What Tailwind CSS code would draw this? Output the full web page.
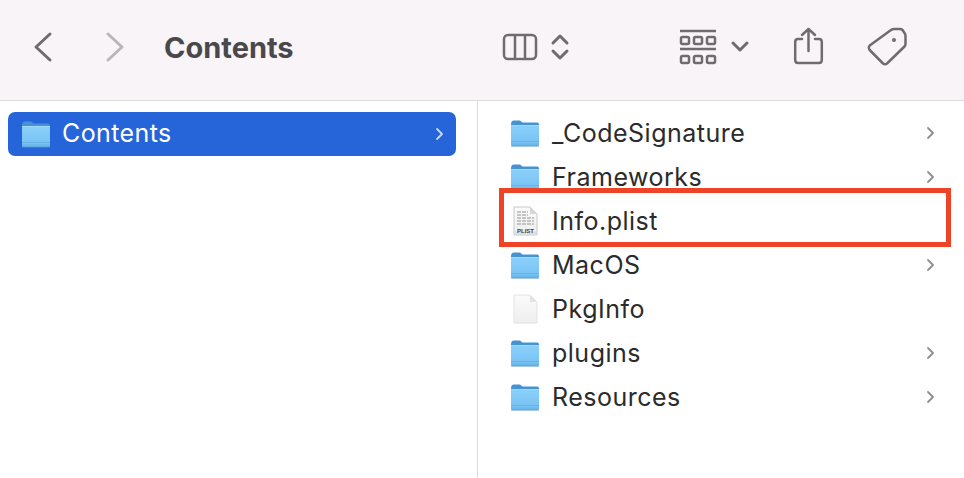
<!DOCTYPE html>
<html>
<head>
<meta charset="utf-8">
<script src="https://cdn.jsdelivr.net/npm/@tailwindcss/browser@4"></script>
</head>
<body class="font-['Inter','Liberation_Sans',sans-serif] bg-white overflow-hidden">
<svg class="absolute w-0 h-0">
  <defs>
    <linearGradient id="fb" x1="0" y1="0" x2="0" y2="1"><stop offset="0" stop-color="#8bd0fa"/><stop offset="1" stop-color="#74c0f3"/></linearGradient>
    <linearGradient id="doc" x1="0" y1="0" x2="0" y2="1"><stop offset="0" stop-color="#fbfbfb"/><stop offset="1" stop-color="#eeeeee"/></linearGradient>
    <symbol id="folder" viewBox="0 0 30 28">
      <path d="M1 5.500C1 3 2 1.500 4 1.500H9.500C11 1.500 11.500 3.500 13 3.500H27C28.300 3.500 29 4.300 29 5.500V12H1Z" fill="#4593d6"/>
      <rect x="1" y="6" width="28" height="21" rx="1.500" fill="url(#fb)"/>
      <rect x="1" y="6" width="28" height="1" fill="#a3dafb"/>
      <rect x="1" y="22" width="28" height="1" fill="#68b2e6"/>
      <rect x="1" y="24.500" width="28" height="1" fill="#68b2e6"/>
      <rect x="1" y="26.500" width="28" height="1" rx=".5" fill="#4f95ca"/>
    </symbol>
  </defs>
</svg>
<div class="relative w-[964px] h-[478px] flex flex-col">
  <header class="h-[101px] shrink-0 flex items-center pb-[6px] bg-[#f8f4f8] border-b border-[#dcdcdc] text-[#6f6b6f]">
    <svg class="ml-[33px] w-[20px] h-[32px]" viewBox="0 0 20 32" fill="none" stroke="currentColor" stroke-width="3" stroke-linecap="round" stroke-linejoin="round"><path d="M17 3L3 16L17 29"/></svg>
    <svg class="ml-[52px] w-[20px] h-[32px] text-[#bab6ba]" viewBox="0 0 20 32" fill="none" stroke="currentColor" stroke-width="3" stroke-linecap="round" stroke-linejoin="round"><path d="M3 3L17 16L3 29"/></svg>
    <h1 class="ml-[39px] w-[338px] text-[29px] font-bold text-[#4a484a] leading-none">Contents</h1>
    <svg class="w-[36px] h-[28px]" viewBox="0 0 36 28" fill="none" stroke="currentColor" stroke-width="2.500" stroke-linejoin="round"><rect x="2" y="2" width="32" height="24" rx="4"/><path d="M13 2V26M23 2V26"/></svg>
    <svg class="ml-[12px] w-[20px] h-[28px]" viewBox="0 0 20 28" fill="none" stroke="currentColor" stroke-width="3" stroke-linecap="round" stroke-linejoin="round"><path d="M3 10L10 3L17 10M3 18L10 25L17 18"/></svg>
    <svg class="ml-[109px] w-[38px] h-[36px]" viewBox="0 0 38 36" fill="none" stroke="currentColor" stroke-width="2.500"><path d="M1 2H37M1 20H37"/><rect x="2" y="8" width="8" height="7" rx="1.500"/><rect x="15" y="8" width="8" height="7" rx="1.500"/><rect x="28" y="8" width="8" height="7" rx="1.500"/><rect x="2" y="27" width="8" height="7" rx="1.500"/><rect x="15" y="27" width="8" height="7" rx="1.500"/><rect x="28" y="27" width="8" height="7" rx="1.500"/></svg>
    <svg class="ml-[14px] w-[18px] h-[12px]" viewBox="0 0 18 12" fill="none" stroke="currentColor" stroke-width="3" stroke-linecap="round" stroke-linejoin="round"><path d="M2 2L9 9L16 2"/></svg>
    <svg class="ml-[43px] mb-[3px] w-[32px] h-[38px]" viewBox="0 0 32 38" fill="none" stroke="currentColor" stroke-width="2.500" stroke-linecap="round" stroke-linejoin="round"><path d="M10 12H6C4 12 3.200 13 3.200 15V33C3.200 35 4 36 6 36H27C29 36 29.800 35 29.800 33V15C29.800 13 29 12 27 12H23"/><path d="M16.500 24V2M10 8L16.500 2L23 8"/></svg>
    <svg class="ml-[43px] w-[40px] h-[40px] mb-[1px]" viewBox="0 0 40 40" fill="none" stroke="currentColor" stroke-width="2.500" stroke-linejoin="round"><path d="M2.700 18.500L24 3Q25.500 2 27 2H33Q34.500 2 35.500 3L37.500 6Q38.500 7 38.500 9V17Q38.500 18.500 37.500 19.500L20 36.500Q18 38 16 36.500L2.700 23Q1 20.500 2.700 18.500Z"/><circle cx="27" cy="13" r="2" fill="currentColor" stroke="none"/></svg>
  </header>
  <main class="flex flex-1 min-h-0">
    <aside class="w-[478px] shrink-0 border-r border-[#dcdcdc] pt-[11px] pl-[8px]">
      <div class="w-[448px] h-[44px] rounded-[7px] bg-[#2565d9] flex items-center text-white text-[25px] tracking-[0.4px]">
        <svg class="ml-[13px] w-[30px] h-[28px]"><use href="#folder"/></svg>
        <span class="ml-[11px]">Contents</span>
        <svg class="ml-auto mr-[12px] w-[9px] h-[14px]" viewBox="0 0 9 14" fill="none" stroke="#c9d9f5" stroke-width="1.800" stroke-linecap="round" stroke-linejoin="round"><path d="M2 2L7 7L2 12"/></svg>
      </div>
    </aside>
    <section class="flex-1 pt-[10px] pl-[32px] pr-[29px] text-[25px] tracking-[0.5px] text-[#2b2b2b]">
      <div class="h-[44px] flex items-center">
        <svg class="w-[30px] h-[28px]"><use href="#folder"/></svg>
        <span class="ml-[12px] pt-[2px]">_CodeSignature</span>
        <svg class="ml-auto w-[9px] h-[14px]" viewBox="0 0 9 14" fill="none" stroke="#8e8e8e" stroke-width="1.800" stroke-linecap="round" stroke-linejoin="round"><path d="M2 2L7 7L2 12"/></svg>
      </div>
      <div class="h-[44px] flex items-center">
        <svg class="w-[30px] h-[28px]"><use href="#folder"/></svg>
        <span class="ml-[12px] pt-[2px]">Frameworks</span>
        <svg class="ml-auto w-[9px] h-[14px]" viewBox="0 0 9 14" fill="none" stroke="#8e8e8e" stroke-width="1.800" stroke-linecap="round" stroke-linejoin="round"><path d="M2 2L7 7L2 12"/></svg>
      </div>
      <div class="h-[44px] flex items-center">
        <svg class="w-[30px] h-[32px]" viewBox="0 0 30 32">
          <path d="M4 2H20L27 9V30H4Z" fill="url(#doc)" stroke="#c8c8c8" stroke-width="1"/>
          <path d="M20 2V9H27Z" fill="#d8d8d8"/>
          <path d="M7 7H18M7 10H18M7 13H24M7 16H24M7 19H24" stroke="#b4b4b4" stroke-width="1.500" stroke-dasharray="4 1"/>
          <rect x="4.500" y="26.500" width="22" height="3" fill="#dedede"/>
          <text x="15.500" y="27.500" text-anchor="middle" font-size="6" font-weight="700" letter-spacing="0" fill="#444" font-family="Liberation Sans">PLIST</text>
        </svg>
        <span class="ml-[12px] pt-[2px]">Info.plist</span>
      </div>
      <div class="h-[44px] flex items-center">
        <svg class="w-[30px] h-[28px]"><use href="#folder"/></svg>
        <span class="ml-[12px] pt-[2px]">MacOS</span>
        <svg class="ml-auto w-[9px] h-[14px]" viewBox="0 0 9 14" fill="none" stroke="#8e8e8e" stroke-width="1.800" stroke-linecap="round" stroke-linejoin="round"><path d="M2 2L7 7L2 12"/></svg>
      </div>
      <div class="h-[44px] flex items-center">
        <svg class="w-[30px] h-[32px]" viewBox="0 0 30 32">
          <path d="M4 2H20L27 9V30H4Z" fill="url(#doc)" stroke="#e2e2e2" stroke-width="1"/>
          <path d="M20 2V9H27Z" fill="#e2e2e2"/>
        </svg>
        <span class="ml-[12px] pt-[2px]">PkgInfo</span>
      </div>
      <div class="h-[44px] flex items-center">
        <svg class="w-[30px] h-[28px]"><use href="#folder"/></svg>
        <span class="ml-[12px] pt-[2px]">plugins</span>
        <svg class="ml-auto w-[9px] h-[14px]" viewBox="0 0 9 14" fill="none" stroke="#8e8e8e" stroke-width="1.800" stroke-linecap="round" stroke-linejoin="round"><path d="M2 2L7 7L2 12"/></svg>
      </div>
      <div class="h-[44px] flex items-center">
        <svg class="w-[30px] h-[28px]"><use href="#folder"/></svg>
        <span class="ml-[12px] pt-[2px]">Resources</span>
        <svg class="ml-auto w-[9px] h-[14px]" viewBox="0 0 9 14" fill="none" stroke="#8e8e8e" stroke-width="1.800" stroke-linecap="round" stroke-linejoin="round"><path d="M2 2L7 7L2 12"/></svg>
      </div>
    </section>
  </main>
  <div class="absolute left-[499px] top-[188px] w-[452px] h-[59px] border-[5px] border-[#ee4327]"></div>
</div>
</body>
</html>
